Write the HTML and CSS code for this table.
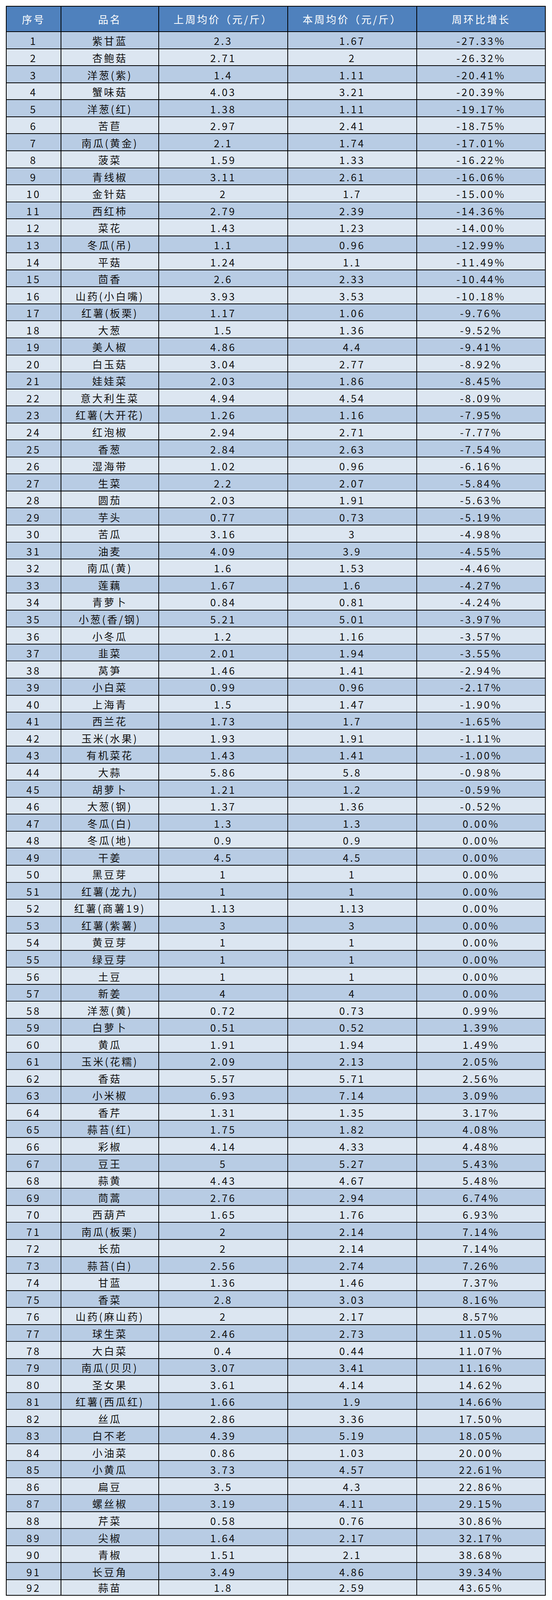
FILE: index.html
```html
<!DOCTYPE html>
<html lang="zh-CN">
<head>
<meta charset="utf-8">
<title>蔬菜价格周环比</title>
<link rel="stylesheet" href="styles.css">
</head>
<body>
<div class="tbl">
<div class="row head"><div>序号</div><div>品名</div><div>上周均价（元/斤）</div><div>本周均价（元/斤）</div><div>周环比增长</div></div>
<div class="row"><div>1</div><div>紫甘蓝</div><div>2.3</div><div>1.67</div><div>-27.33%</div></div>
<div class="row"><div>2</div><div>杏鲍菇</div><div>2.71</div><div>2</div><div>-26.32%</div></div>
<div class="row"><div>3</div><div>洋葱(紫)</div><div>1.4</div><div>1.11</div><div>-20.41%</div></div>
<div class="row"><div>4</div><div>蟹味菇</div><div>4.03</div><div>3.21</div><div>-20.39%</div></div>
<div class="row"><div>5</div><div>洋葱(红)</div><div>1.38</div><div>1.11</div><div>-19.17%</div></div>
<div class="row"><div>6</div><div>苦苣</div><div>2.97</div><div>2.41</div><div>-18.75%</div></div>
<div class="row"><div>7</div><div>南瓜(黄金)</div><div>2.1</div><div>1.74</div><div>-17.01%</div></div>
<div class="row"><div>8</div><div>菠菜</div><div>1.59</div><div>1.33</div><div>-16.22%</div></div>
<div class="row"><div>9</div><div>青线椒</div><div>3.11</div><div>2.61</div><div>-16.06%</div></div>
<div class="row"><div>10</div><div>金针菇</div><div>2</div><div>1.7</div><div>-15.00%</div></div>
<div class="row"><div>11</div><div>西红柿</div><div>2.79</div><div>2.39</div><div>-14.36%</div></div>
<div class="row"><div>12</div><div>菜花</div><div>1.43</div><div>1.23</div><div>-14.00%</div></div>
<div class="row"><div>13</div><div>冬瓜(吊)</div><div>1.1</div><div>0.96</div><div>-12.99%</div></div>
<div class="row"><div>14</div><div>平菇</div><div>1.24</div><div>1.1</div><div>-11.49%</div></div>
<div class="row"><div>15</div><div>茴香</div><div>2.6</div><div>2.33</div><div>-10.44%</div></div>
<div class="row"><div>16</div><div>山药(小白嘴)</div><div>3.93</div><div>3.53</div><div>-10.18%</div></div>
<div class="row"><div>17</div><div>红薯(板栗)</div><div>1.17</div><div>1.06</div><div>-9.76%</div></div>
<div class="row"><div>18</div><div>大葱</div><div>1.5</div><div>1.36</div><div>-9.52%</div></div>
<div class="row"><div>19</div><div>美人椒</div><div>4.86</div><div>4.4</div><div>-9.41%</div></div>
<div class="row"><div>20</div><div>白玉菇</div><div>3.04</div><div>2.77</div><div>-8.92%</div></div>
<div class="row"><div>21</div><div>娃娃菜</div><div>2.03</div><div>1.86</div><div>-8.45%</div></div>
<div class="row"><div>22</div><div>意大利生菜</div><div>4.94</div><div>4.54</div><div>-8.09%</div></div>
<div class="row"><div>23</div><div>红薯(大开花)</div><div>1.26</div><div>1.16</div><div>-7.95%</div></div>
<div class="row"><div>24</div><div>红泡椒</div><div>2.94</div><div>2.71</div><div>-7.77%</div></div>
<div class="row"><div>25</div><div>香葱</div><div>2.84</div><div>2.63</div><div>-7.54%</div></div>
<div class="row"><div>26</div><div>湿海带</div><div>1.02</div><div>0.96</div><div>-6.16%</div></div>
<div class="row"><div>27</div><div>生菜</div><div>2.2</div><div>2.07</div><div>-5.84%</div></div>
<div class="row"><div>28</div><div>圆茄</div><div>2.03</div><div>1.91</div><div>-5.63%</div></div>
<div class="row"><div>29</div><div>芋头</div><div>0.77</div><div>0.73</div><div>-5.19%</div></div>
<div class="row"><div>30</div><div>苦瓜</div><div>3.16</div><div>3</div><div>-4.98%</div></div>
<div class="row"><div>31</div><div>油麦</div><div>4.09</div><div>3.9</div><div>-4.55%</div></div>
<div class="row"><div>32</div><div>南瓜(黄)</div><div>1.6</div><div>1.53</div><div>-4.46%</div></div>
<div class="row"><div>33</div><div>莲藕</div><div>1.67</div><div>1.6</div><div>-4.27%</div></div>
<div class="row"><div>34</div><div>青萝卜</div><div>0.84</div><div>0.81</div><div>-4.24%</div></div>
<div class="row"><div>35</div><div>小葱(香/钢)</div><div>5.21</div><div>5.01</div><div>-3.97%</div></div>
<div class="row"><div>36</div><div>小冬瓜</div><div>1.2</div><div>1.16</div><div>-3.57%</div></div>
<div class="row"><div>37</div><div>韭菜</div><div>2.01</div><div>1.94</div><div>-3.55%</div></div>
<div class="row"><div>38</div><div>莴笋</div><div>1.46</div><div>1.41</div><div>-2.94%</div></div>
<div class="row"><div>39</div><div>小白菜</div><div>0.99</div><div>0.96</div><div>-2.17%</div></div>
<div class="row"><div>40</div><div>上海青</div><div>1.5</div><div>1.47</div><div>-1.90%</div></div>
<div class="row"><div>41</div><div>西兰花</div><div>1.73</div><div>1.7</div><div>-1.65%</div></div>
<div class="row"><div>42</div><div>玉米(水果)</div><div>1.93</div><div>1.91</div><div>-1.11%</div></div>
<div class="row"><div>43</div><div>有机菜花</div><div>1.43</div><div>1.41</div><div>-1.00%</div></div>
<div class="row"><div>44</div><div>大蒜</div><div>5.86</div><div>5.8</div><div>-0.98%</div></div>
<div class="row"><div>45</div><div>胡萝卜</div><div>1.21</div><div>1.2</div><div>-0.59%</div></div>
<div class="row"><div>46</div><div>大葱(钢)</div><div>1.37</div><div>1.36</div><div>-0.52%</div></div>
<div class="row"><div>47</div><div>冬瓜(白)</div><div>1.3</div><div>1.3</div><div>0.00%</div></div>
<div class="row"><div>48</div><div>冬瓜(地)</div><div>0.9</div><div>0.9</div><div>0.00%</div></div>
<div class="row"><div>49</div><div>干姜</div><div>4.5</div><div>4.5</div><div>0.00%</div></div>
<div class="row"><div>50</div><div>黑豆芽</div><div>1</div><div>1</div><div>0.00%</div></div>
<div class="row"><div>51</div><div>红薯(龙九)</div><div>1</div><div>1</div><div>0.00%</div></div>
<div class="row"><div>52</div><div>红薯(商薯19)</div><div>1.13</div><div>1.13</div><div>0.00%</div></div>
<div class="row"><div>53</div><div>红薯(紫薯)</div><div>3</div><div>3</div><div>0.00%</div></div>
<div class="row"><div>54</div><div>黄豆芽</div><div>1</div><div>1</div><div>0.00%</div></div>
<div class="row"><div>55</div><div>绿豆芽</div><div>1</div><div>1</div><div>0.00%</div></div>
<div class="row"><div>56</div><div>土豆</div><div>1</div><div>1</div><div>0.00%</div></div>
<div class="row"><div>57</div><div>新姜</div><div>4</div><div>4</div><div>0.00%</div></div>
<div class="row"><div>58</div><div>洋葱(黄)</div><div>0.72</div><div>0.73</div><div>0.99%</div></div>
<div class="row"><div>59</div><div>白萝卜</div><div>0.51</div><div>0.52</div><div>1.39%</div></div>
<div class="row"><div>60</div><div>黄瓜</div><div>1.91</div><div>1.94</div><div>1.49%</div></div>
<div class="row"><div>61</div><div>玉米(花糯)</div><div>2.09</div><div>2.13</div><div>2.05%</div></div>
<div class="row"><div>62</div><div>香菇</div><div>5.57</div><div>5.71</div><div>2.56%</div></div>
<div class="row"><div>63</div><div>小米椒</div><div>6.93</div><div>7.14</div><div>3.09%</div></div>
<div class="row"><div>64</div><div>香芹</div><div>1.31</div><div>1.35</div><div>3.17%</div></div>
<div class="row"><div>65</div><div>蒜苔(红)</div><div>1.75</div><div>1.82</div><div>4.08%</div></div>
<div class="row"><div>66</div><div>彩椒</div><div>4.14</div><div>4.33</div><div>4.48%</div></div>
<div class="row"><div>67</div><div>豆王</div><div>5</div><div>5.27</div><div>5.43%</div></div>
<div class="row"><div>68</div><div>蒜黄</div><div>4.43</div><div>4.67</div><div>5.48%</div></div>
<div class="row"><div>69</div><div>茼蒿</div><div>2.76</div><div>2.94</div><div>6.74%</div></div>
<div class="row"><div>70</div><div>西葫芦</div><div>1.65</div><div>1.76</div><div>6.93%</div></div>
<div class="row"><div>71</div><div>南瓜(板栗)</div><div>2</div><div>2.14</div><div>7.14%</div></div>
<div class="row"><div>72</div><div>长茄</div><div>2</div><div>2.14</div><div>7.14%</div></div>
<div class="row"><div>73</div><div>蒜苔(白)</div><div>2.56</div><div>2.74</div><div>7.26%</div></div>
<div class="row"><div>74</div><div>甘蓝</div><div>1.36</div><div>1.46</div><div>7.37%</div></div>
<div class="row"><div>75</div><div>香菜</div><div>2.8</div><div>3.03</div><div>8.16%</div></div>
<div class="row"><div>76</div><div>山药(麻山药)</div><div>2</div><div>2.17</div><div>8.57%</div></div>
<div class="row"><div>77</div><div>球生菜</div><div>2.46</div><div>2.73</div><div>11.05%</div></div>
<div class="row"><div>78</div><div>大白菜</div><div>0.4</div><div>0.44</div><div>11.07%</div></div>
<div class="row"><div>79</div><div>南瓜(贝贝)</div><div>3.07</div><div>3.41</div><div>11.16%</div></div>
<div class="row"><div>80</div><div>圣女果</div><div>3.61</div><div>4.14</div><div>14.62%</div></div>
<div class="row"><div>81</div><div>红薯(西瓜红)</div><div>1.66</div><div>1.9</div><div>14.66%</div></div>
<div class="row"><div>82</div><div>丝瓜</div><div>2.86</div><div>3.36</div><div>17.50%</div></div>
<div class="row"><div>83</div><div>白不老</div><div>4.39</div><div>5.19</div><div>18.05%</div></div>
<div class="row"><div>84</div><div>小油菜</div><div>0.86</div><div>1.03</div><div>20.00%</div></div>
<div class="row"><div>85</div><div>小黄瓜</div><div>3.73</div><div>4.57</div><div>22.61%</div></div>
<div class="row"><div>86</div><div>扁豆</div><div>3.5</div><div>4.3</div><div>22.86%</div></div>
<div class="row"><div>87</div><div>螺丝椒</div><div>3.19</div><div>4.11</div><div>29.15%</div></div>
<div class="row"><div>88</div><div>芹菜</div><div>0.58</div><div>0.76</div><div>30.86%</div></div>
<div class="row"><div>89</div><div>尖椒</div><div>1.64</div><div>2.17</div><div>32.17%</div></div>
<div class="row"><div>90</div><div>青椒</div><div>1.51</div><div>2.1</div><div>38.68%</div></div>
<div class="row"><div>91</div><div>长豆角</div><div>3.49</div><div>4.86</div><div>39.34%</div></div>
<div class="row last"><div>92</div><div>蒜苗</div><div>1.8</div><div>2.59</div><div>43.65%</div></div>
</div>
</body>
</html>
```

FILE: styles.css
```css
:root {
  --u: calc(100vh / 4138);
}

html, body {
  margin: 0;
  padding: 0;
  background: #ffffff;
}

body {
  padding: calc(15 * var(--u)) 16px 0 15px;
  font-family: "Noto Sans CJK SC", "DejaVu Sans", sans-serif;
}

.tbl {
  width: 1377px;
  padding: 2px;
  background: #000;
  display: flex;
  flex-direction: column;
  gap: 2px;
}

.row {
  display: grid;
  grid-template-columns: 138px 248px 328px 328px 327px;
  grid-template-rows: 100%;
  column-gap: 2px;
  height: calc(44 * var(--u) - 2px);
  flex: none;
  overflow: hidden;
}

.row > div {
  display: flex;
  align-items: center;
  justify-content: center;
  padding-top: 3px;
  min-height: 0;
  font-size: 26px;
  line-height: 38px;
  letter-spacing: 4px;
  color: #111;
  white-space: nowrap;
}

.row:nth-child(even) > div {
  background: #b8cce4;
}

.row:nth-child(odd) > div {
  background: #dce6f1;
}

.row.head {
  height: calc(66 * var(--u) - 2px);
}

.row.head > div {
  background: #4f81bd;
  color: #ffffff;
  padding-top: 0;
}

.row.last {
  height: calc(40 * var(--u) - 2px);
}

.row.last > div {
  padding-top: 0;
}
```
